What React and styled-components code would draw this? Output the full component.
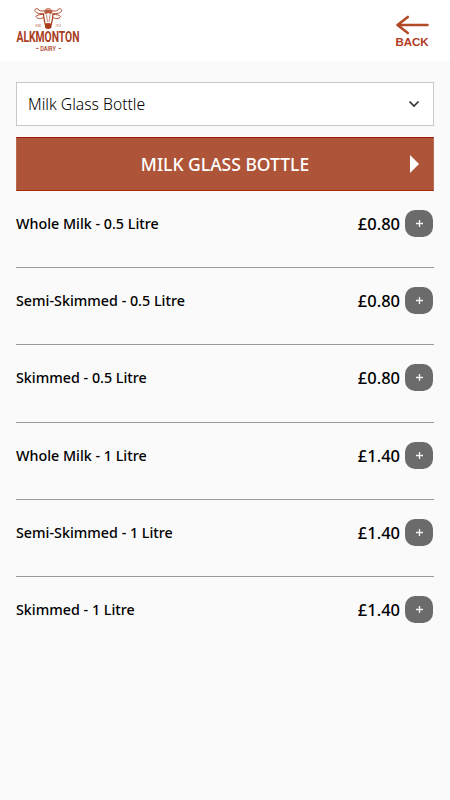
import React from 'react';
import styled, { createGlobalStyle, css } from 'styled-components';

const products = [
  { name: 'Whole Milk - 0.5 Litre', price: '£0.80' },
  { name: 'Semi-Skimmed - 0.5 Litre', price: '£0.80' },
  { name: 'Skimmed - 0.5 Litre', price: '£0.80' },
  { name: 'Whole Milk - 1 Litre', price: '£1.40' },
  { name: 'Semi-Skimmed - 1 Litre', price: '£1.40' },
  { name: 'Skimmed - 1 Litre', price: '£1.40' },
];

const Logo = () => (
  <LogoSvg viewBox="0 0 64 48" role="img" aria-label="Alkmonton Dairy">
    <g fill="none" stroke="#a83c1c" strokeWidth=".9" strokeLinecap="round" strokeLinejoin="round">
      <path d="M28 6.300C24 7.300 19 6 18.800 3.600C18.800 2 20.500 1.200 22 2C22.500 3.800 25 4.500 28 3.800" />
      <path d="M36.500 6.300C40.500 7.300 45.500 6 45.700 3.600C45.700 2 44 1.200 42.500 2C42 3.800 39.500 4.500 36.500 3.800" />
      <path d="M27.500 7.500C24 7.300 21 8 19.800 9.500C21.500 12 25.500 12.500 27.800 10" />
      <path d="M37 7.500C40.500 7.300 43.500 8 44.700 9.500C43 12 39 12.500 36.700 10" />
      <path d="M27.500 7.500L28 12L29.400 18M37 7.500L36.500 12L35.100 18" strokeWidth="1.200" />
      <path d="M28.500 4C29.200 .8 35.300 .8 36 4" />
      <path d="M30.500 8L31.400 14.500M34 8L33.100 14.500" strokeWidth=".6" />
    </g>
    <path d="M28 4.200Q32.200 .8 36.500 4.200L35 7.200L32.200 6L29.500 7.200Z" fill="#b8573c" />
    <path d="M29.200 16.700Q32.200 15.300 35.200 16.700L35.600 20.500Q32.200 23.500 28.900 20.500Z" fill="#a83c1c" />
    <LogoText x="22.3" y="19.700" size={4} width={5.6} $light>ESD</LogoText>
    <LogoText x="42.2" y="19.700" size={4} width={5.6} $light>1913</LogoText>
    <LogoText x="32" y="35.200" size={14.5} width={63} $bold>ALKMONTON</LogoText>
    <LogoText x="32" y="43.700" size={6.6} width={15.5}>DAIRY</LogoText>
    <path d="M20 41.500H22.500M42.500 41.500H45" stroke="#a83c1c" strokeWidth=".8" />
  </LogoSvg>
);

// Text is laid out at its natural width and condensed around its centre
const LogoText = ({ x, y, size, width, children, $bold, $light }) => {
  const natural = size * 0.64 * children.length;
  return (
    <LogoWord
      fontSize={size}
      $bold={$bold}
      $light={$light}
      textLength={natural}
      lengthAdjust="spacingAndGlyphs"
      transform={`translate(${x} ${y}) scale(${width / natural} 1)`}
    >
      {children}
    </LogoWord>
  );
};

const App = () => (
  <>
    <GlobalStyle />
    <Header>
      <Logo />
      <BackLink>
        <svg width="34" height="20" viewBox="0 0 34 20">
          <path d="M32.500 10H2.500M12.800 2L2.500 10L12.800 18" fill="none" stroke="#b34a27" strokeWidth="2.600" strokeLinecap="round" strokeLinejoin="round" />
        </svg>
        <span>BACK</span>
      </BackLink>
    </Header>
    <Main>
      <Select>
        <span>Milk Glass Bottle</span>
        <svg width="12" height="8" viewBox="0 0 12 8">
          <path d="M1.500 1.500L6 6L10.500 1.500" fill="none" stroke="#333" strokeWidth="1.700" />
        </svg>
      </Select>
      <Category>
        <span />
        <span>MILK GLASS BOTTLE</span>
        <svg width="9" height="18" viewBox="0 0 9 18">
          <path d="M0 0L9 9L0 18Z" fill="#fff" />
        </svg>
      </Category>
      <List>
        {products.map((product) => (
          <Row key={product.name}>
            <Name>{product.name}</Name>
            <Price>{product.price}</Price>
            <AddButton aria-label="Add">
              <svg width="7" height="7" viewBox="0 0 7 7">
                <path d="M3.500 0V7M0 3.500H7" stroke="#f4f4f4" strokeWidth="1.300" />
              </svg>
            </AddButton>
          </Row>
        ))}
      </List>
    </Main>
  </>
);

const GlobalStyle = createGlobalStyle`
  * {
    box-sizing: border-box;
  }
  body {
    margin: 0;
    min-height: 100vh;
    background-color: #fafafa;
    color: #000;
    font-family: 'Noto Sans', sans-serif;
  }
`;

const Header = styled.header`
  height: 61px;
  padding: 7px 21px 0 16px;
  display: flex;
  justify-content: space-between;
  align-items: flex-start;
  background-color: #fff;
`;

const LogoSvg = styled.svg`
  width: 64px;
  height: 48px;
  overflow: visible;
`;

const LogoWord = styled.text`
  fill: #a83c1c;
  font-family: 'Roboto', sans-serif;
  font-weight: 500;
  text-anchor: middle;
  ${props => props.$bold && css`
    font-weight: 700;
  `}
  ${props => props.$light && css`
    opacity: 0.7;
  `}
`;

const BackLink = styled.a`
  padding-top: 8px;
  display: flex;
  flex-direction: column;
  align-items: center;
  color: #b03a1c;
  font: 700 11.5px/14px 'Liberation Sans', sans-serif;
  svg {
    display: block;
  }
`;

const Main = styled.main`
  padding: 21px 16px 0;
`;

const Select = styled.div`
  height: 44px;
  padding: 0 13px 0 11px;
  display: flex;
  justify-content: space-between;
  align-items: center;
  border: 1px solid #c8c8c8;
  background-color: #fff;
  font-size: 15.7px;
  font-weight: 300;
`;

const Category = styled.div`
  height: 54px;
  margin-top: 11px;
  padding: 0 14px;
  display: grid;
  grid-template-columns: 9px 1fr 9px;
  align-items: center;
  border: 1px solid #b96a52;
  border-top-color: #a01808;
  border-bottom-color: #a82a08;
  background-color: #ae5439;
  color: #fff;
  font-size: 17.5px;
  font-weight: 500;
  text-align: center;
`;

const List = styled.ul`
  margin: 0;
  padding: 0;
  list-style: none;
`;

const Row = styled.li`
  height: 77.2px;
  padding-top: 19px;
  display: flex;
  align-items: flex-start;
  border-bottom: 1px solid #999;
  &:last-child {
    border-bottom: 0;
  }
`;

const Name = styled.span`
  flex: 1;
  font-size: 14.3px;
  font-weight: 500;
  line-height: 28.4px;
`;

const Price = styled.span`
  margin-right: 5.3px;
  font-size: 16.5px;
  font-weight: 500;
  line-height: 28.4px;
`;

const AddButton = styled.button`
  width: 27.5px;
  height: 27px;
  margin-right: 1.2px;
  padding: 0;
  display: flex;
  justify-content: center;
  align-items: center;
  border: 0;
  border-radius: 10px;
  background-color: #6b6b6b;
`;

export default App;
